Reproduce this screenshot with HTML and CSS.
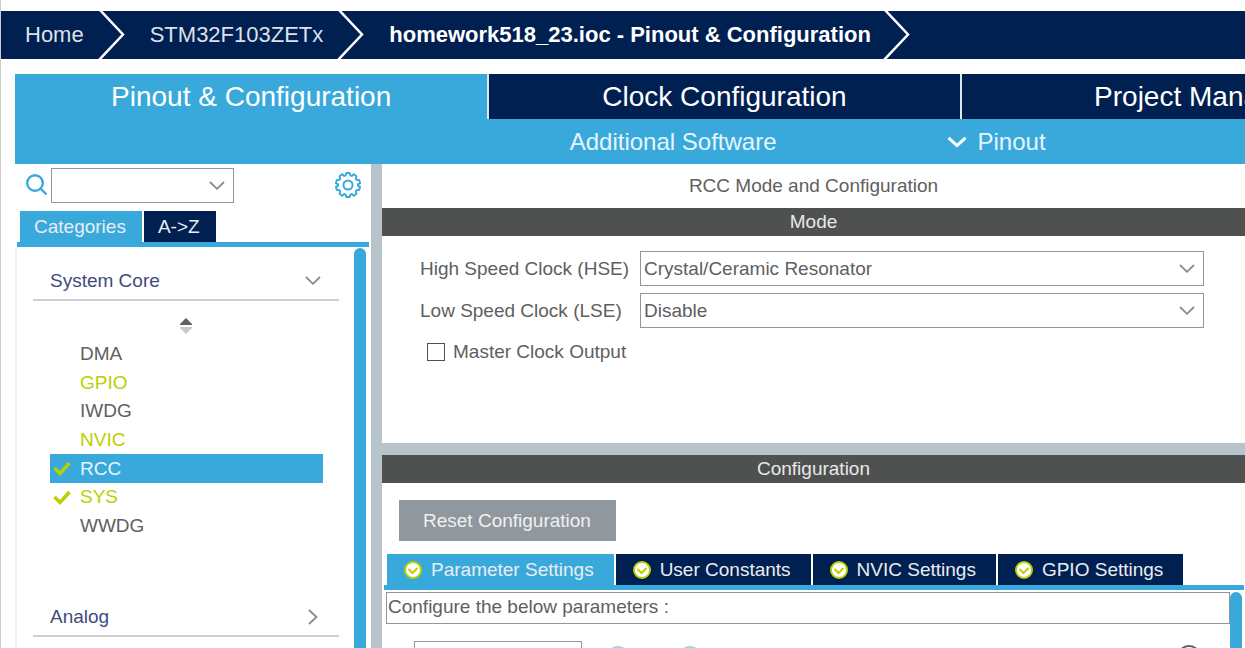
FILE: index.html
```html
<!DOCTYPE html>
<html lang="en">
<head>
<meta charset="utf-8">
<title>homework518_23.ioc - Pinout &amp; Configuration</title>
<link rel="stylesheet" href="styles.css">
</head>
<body>
<div class="app">
  <nav class="breadcrumb" aria-label="Breadcrumb">
    <a class="crumb" href="#">Home</a>
    <svg class="crumb-sep" viewBox="0 0 28 48" aria-hidden="true"><path d="M2 -1L25 23.500L1 49"/></svg>
    <a class="crumb" href="#">STM32F103ZETx</a>
    <svg class="crumb-sep" viewBox="0 0 28 48" aria-hidden="true"><path d="M2 -1L25 23.500L1 49"/></svg>
    <a class="crumb crumb-current" href="#">homework518_23.ioc - Pinout &amp; Configuration</a>
    <svg class="crumb-sep crumb-sep-last" viewBox="0 0 28 48" aria-hidden="true"><path d="M2 -1L25 23.500L1 49"/></svg>
  </nav>

  <div class="workspace">
    <div class="main-tabs">
      <button class="main-tab main-tab-active">Pinout &amp; Configuration</button>
      <button class="main-tab">Clock Configuration</button>
      <button class="main-tab">Project Manager</button>
    </div>
    <div class="toolbar">
      <button class="tool">Additional Software</button>
      <button class="tool">
        <svg class="tool-icon" viewBox="0 0 20 12" aria-hidden="true"><path d="M1.500 1.800L10 9.500L18.500 1.800"/></svg>
        Pinout
      </button>
    </div>

    <div class="panes">
      <aside class="sidebar">
        <div class="search">
          <svg class="search-icon" viewBox="0 0 22 22" aria-hidden="true"><circle cx="9" cy="9" r="7.800"/><path d="M14.500 14.500L20.500 20.500"/></svg>
          <div class="combo">
            <select class="combo-select" aria-label="Search"><option></option></select>
            <svg class="combo-arrow" viewBox="0 0 16 9" aria-hidden="true"><path d="M1 1L8 7.800L15 1"/></svg>
          </div>
          <button class="gear" aria-label="Settings">
            <svg class="gear-icon" viewBox="-12 -12 24 24" aria-hidden="true">
              <path d="M-1.400 -11H1.400L2.300 -8.700L3.500 -8.300L5.300 -10L7.700 -8.200L7.200 -5.800L7.900 -4.800L10.300 -4.500L11.200 -1.800L9.200 -.600V.600L11.200 1.800L10.300 4.500L7.900 4.800L7.200 5.800L7.700 8.200L5.300 10L3.500 8.300L2.300 8.700L1.400 11H-1.400L-2.300 8.700L-3.500 8.300L-5.300 10L-7.700 8.200L-7.200 5.800L-7.900 4.800L-10.300 4.500L-11.200 1.800L-9.200 .600V-.600L-11.200 -1.800L-10.300 -4.500L-7.900 -4.800L-7.200 -5.800L-7.700 -8.200L-5.300 -10L-3.500 -8.300L-2.300 -8.700Z"/>
              <circle r="4.200"/>
            </svg>
          </button>
        </div>
        <div class="tabs side-tabs">
          <button class="tab side-tab tab-active">Categories</button>
          <button class="tab side-tab">A-&gt;Z</button>
        </div>
        <div class="tree">
          <div class="tree-body">
            <button class="group">System Core
              <svg class="group-down" viewBox="0 0 16 9" aria-hidden="true"><path d="M1 1L8 7.800L15 1"/></svg>
            </button>
            <button class="sort" aria-label="Sort">
              <svg class="sort-icon" viewBox="0 0 12 16" aria-hidden="true"><path class="sort-up" d="M6 0L12 6V7H0V6Z"/><path class="sort-down" d="M0 9H12V10L6 16L0 10Z"/></svg>
            </button>
            <ul class="items">
              <li class="item">DMA</li>
              <li class="item item-used">GPIO</li>
              <li class="item">IWDG</li>
              <li class="item item-used">NVIC</li>
              <li class="item item-selected"><svg class="check" viewBox="0 0 18 15" aria-hidden="true"><path d="M1.500 7L7 12.500L16.500 2"/></svg>RCC</li>
              <li class="item item-used"><svg class="check" viewBox="0 0 18 15" aria-hidden="true"><path d="M1.500 7L7 12.500L16.500 2"/></svg>SYS</li>
              <li class="item">WWDG</li>
            </ul>
            <button class="group">Analog
              <svg class="group-right" viewBox="0 0 10 16" aria-hidden="true"><path d="M1 1L8.500 8L1 15"/></svg>
            </button>
          </div>
          <div class="scrollbar"></div>
        </div>
      </aside>

      <main class="detail">
        <h1 class="detail-title">RCC Mode and Configuration</h1>
        <section class="mode">
          <h2 class="bar">Mode</h2>
          <div class="mode-form">
            <div class="field">
              <label class="field-label" for="hse">High Speed Clock (HSE)</label>
              <div class="combo">
                <select class="combo-select" id="hse"><option>Crystal/Ceramic Resonator</option></select>
                <svg class="combo-arrow" viewBox="0 0 16 9" aria-hidden="true"><path d="M1 1L8 7.800L15 1"/></svg>
              </div>
            </div>
            <div class="field">
              <label class="field-label" for="lse">Low Speed Clock (LSE)</label>
              <div class="combo">
                <select class="combo-select" id="lse"><option>Disable</option></select>
                <svg class="combo-arrow" viewBox="0 0 16 9" aria-hidden="true"><path d="M1 1L8 7.800L15 1"/></svg>
              </div>
            </div>
            <label class="mco"><input class="mco-box" type="checkbox">Master Clock Output</label>
          </div>
        </section>
        <section class="config">
          <h2 class="bar">Configuration</h2>
          <button class="reset">Reset Configuration</button>
          <div class="tabs config-tabs">
            <button class="tab tab-active"><svg class="badge" viewBox="0 0 18 18" aria-hidden="true"><circle cx="9" cy="9" r="8"/><path d="M4.500 8L8.500 12L13.500 7"/></svg>Parameter Settings</button>
            <button class="tab"><svg class="badge" viewBox="0 0 18 18" aria-hidden="true"><circle cx="9" cy="9" r="8"/><path d="M4.500 8L8.500 12L13.500 7"/></svg>User Constants</button>
            <button class="tab"><svg class="badge" viewBox="0 0 18 18" aria-hidden="true"><circle cx="9" cy="9" r="8"/><path d="M4.500 8L8.500 12L13.500 7"/></svg>NVIC Settings</button>
            <button class="tab"><svg class="badge" viewBox="0 0 18 18" aria-hidden="true"><circle cx="9" cy="9" r="8"/><path d="M4.500 8L8.500 12L13.500 7"/></svg>GPIO Settings</button>
          </div>
          <div class="params">
            <div class="params-body">
              <p class="hint">Configure the below parameters :</p>
              <div class="filter">
                <input class="filter-input" type="text" aria-label="Search parameters">
                <button class="round" aria-label="Previous"></button>
                <button class="round" aria-label="Next"></button>
                <button class="round round-info" aria-label="Information"></button>
              </div>
            </div>
            <div class="scrollbar"></div>
          </div>
        </section>
      </main>
    </div>
  </div>
</div>
</body>
</html>
```
FILE: styles.css
```css
* { box-sizing: border-box; }

body {
  margin: 0;
  background: #fff;
  color: #606060;
  font: 19px/28px "Liberation Sans", Arial, sans-serif;
}

button, select, input { font: inherit; color: inherit; }

button {
  border: 0;
  padding: 0;
  background: none;
  white-space: nowrap;
}

svg { flex: none; fill: none; }

.app {
  display: flex;
  flex-direction: column;
  height: 100vh;
  overflow: hidden;
  border-left: 1px solid #ccc;
}

/* Breadcrumb */
.breadcrumb {
  display: flex;
  flex: none;
  align-items: center;
  height: 48px;
  margin: 11px 0 15px;
  padding-left: 24px;
  background: #002052;
}

.crumb {
  color: #dde1e8;
  font-size: 22px;
  text-decoration: none;
  white-space: nowrap;
}

.crumb-current { color: #fff; font-weight: bold; }

.crumb-sep {
  width: 28px;
  height: 48px;
  margin: 0 24px 0 14px;
  stroke: #fff;
  stroke-width: 2.5;
}

.crumb + .crumb-sep-last { margin-left: 12px; }

/* Top level tabs */
.workspace {
  display: flex;
  flex: 1;
  flex-direction: column;
  min-height: 0;
  padding-left: 14px;
}

.main-tabs {
  display: flex;
  flex: none;
  height: 45px;
  overflow: hidden;
}

.main-tab {
  flex: 0 0 38.4%;
  border-left: 2px solid #dfe5ec;
  background: #002052;
  color: #fff;
  font-size: 28px;
}

.main-tab-active { border-left: 0; background: #39a9dc; }

.toolbar {
  display: flex;
  flex: none;
  gap: 170px;
  height: 45px;
  padding-left: 45.1%;
  background: #39a9dc;
}

.tool {
  display: flex;
  align-items: center;
  gap: 11px;
  color: #e6f5fc;
  font-size: 24px;
}

.tool-icon { width: 20px; height: 12px; stroke: #fff; stroke-width: 3; }

.panes { display: flex; flex: 1; min-height: 0; }

/* Sidebar */
.sidebar {
  display: flex;
  flex: 0 0 356px;
  flex-direction: column;
}

.search {
  display: flex;
  align-items: center;
  height: 36px;
  margin: 3px 10px 8px 11px;
}

.search-icon { width: 22px; height: 22px; margin-right: 3px; stroke: #39a9dc; stroke-width: 2.4; }

.search .combo { flex: 0 0 183px; }

.gear { display: flex; margin-left: auto; }
.gear-icon { width: 26px; height: 26px; stroke: #39a9dc; stroke-width: 1.8; }

.combo { display: grid; flex: 1; align-items: center; }

.combo-select {
  grid-area: 1 / 1;
  width: 100%;
  height: 35px;
  padding: 0 36px 0 3px;
  border: 1px solid #8f979e;
  border-radius: 0;
  background: #fff;
  appearance: none;
}

.combo-arrow {
  grid-area: 1 / 1;
  justify-self: end;
  width: 16px;
  height: 9px;
  margin-right: 9px;
  stroke: #8c8c8c;
  stroke-width: 1.8;
  pointer-events: none;
}

/* Tab strips */
.tabs { display: flex; gap: 2px; height: 36px; border-bottom: 5px solid #39a9dc; }

.tab {
  display: flex;
  align-items: center;
  gap: 9px;
  padding: 0 20px 0 17px;
  background: #002052;
  color: #e9edf3;
}

.tab-active { background: #39a9dc; }

.side-tabs { flex: none; margin: 0 2px; padding-left: 3px; }
.side-tab { padding: 0 16px 0 14px; }

.badge { width: 18px; height: 18px; fill: #fff; stroke: #bccf00; stroke-width: 2; }

/* Category tree */
.tree {
  display: flex;
  flex: 1;
  min-height: 0;
  padding: 1px 5px 0 0;
  border-left: 2px solid #eef0f0;
}

.tree-body {
  flex: 1;
  overflow: hidden;
  padding: 14px 15px 0 16px;
}

.scrollbar { flex: 0 0 12px; border-radius: 6px 6px 0 0; background: #39a9dc; }

.group {
  display: flex;
  align-items: center;
  justify-content: space-between;
  width: 100%;
  height: 39px;
  padding: 0 18px 0 17px;
  border-bottom: 2px solid #cbd2d6;
  color: #3f4c7c;
}

.group-down { width: 16px; height: 9px; stroke: #8c8c8c; stroke-width: 1.8; }
.group-right { width: 10px; height: 16px; margin-right: 3px; stroke: #8c8c8c; stroke-width: 1.8; }

.sort { display: flex; margin: 17px auto 6px; }
.sort-icon { width: 12px; height: 16px; }
.sort-up { fill: #606060; }
.sort-down { fill: #c8c8c8; }

.items {
  display: grid;
  grid-auto-rows: 1fr;
  height: 200px;
  margin: 0 16px 58px 17px;
  padding: 0;
  list-style: none;
}

.item { display: flex; align-items: center; padding-left: 30px; }
.item:has(.check) { padding-left: 3px; }
.item-used { color: #bccf00; }
.item-selected { background: #39a9dc; color: #e6f5fc; }
.check { width: 18px; height: 15px; margin-right: 9px; stroke: #bccf00; stroke-width: 3.5; }

/* Detail pane */
.detail {
  display: flex;
  flex: 1;
  flex-direction: column;
  min-width: 0;
  border-left: 11px solid #b8c4cb;
}

.detail-title {
  flex: none;
  margin: 0;
  padding: 8px 0;
  font-size: 19px;
  font-weight: normal;
  text-align: center;
}

.bar {
  margin: 0;
  background: #4f5150;
  color: #e8e8e8;
  font-size: 19px;
  font-weight: normal;
  text-align: center;
}

.mode { flex: none; border-bottom: 12px solid #b8c4cb; }

.mode-form {
  display: flex;
  flex-direction: column;
  gap: 7px;
  padding: 15px 41px 74px 38px;
}

.field { display: flex; align-items: center; }
.field-label { flex: 0 0 220px; }

.mco { display: flex; align-items: center; gap: 8px; height: 34px; padding-left: 7px; }

.mco-box {
  width: 18px;
  height: 18px;
  margin: 0;
  border: 1px solid #505050;
  background: #fff;
  appearance: none;
}

.config { display: flex; flex: 1; flex-direction: column; min-height: 0; }

.reset {
  align-self: flex-start;
  flex: none;
  height: 41px;
  margin: 17px 0 13px 17px;
  padding: 0 25px 0 24px;
  background: #90979d;
  color: #f0f1f2;
}

.config-tabs { flex: none; margin: 0 1px 0 2px; padding-left: 3px; }

.params { display: flex; flex: 1; min-height: 0; padding: 2px 3px 0 4px; }
.params-body { flex: 1; overflow: hidden; }

.hint { margin: 0; padding: 0 1px 2px; border: 1px solid #8f979e; }

.filter { display: flex; align-items: flex-start; padding: 17px 29px 0 28px; }

.filter-input { width: 168px; height: 34px; margin-right: 24px; border: 1px solid #8f979e; }

.round {
  width: 24px;
  height: 24px;
  margin: 5px 48px 0 0;
  border: 2px solid #9fd2ea;
  border-radius: 50%;
}

.round-info { margin: 4px 0 0 auto; border-color: #606060; }
```
